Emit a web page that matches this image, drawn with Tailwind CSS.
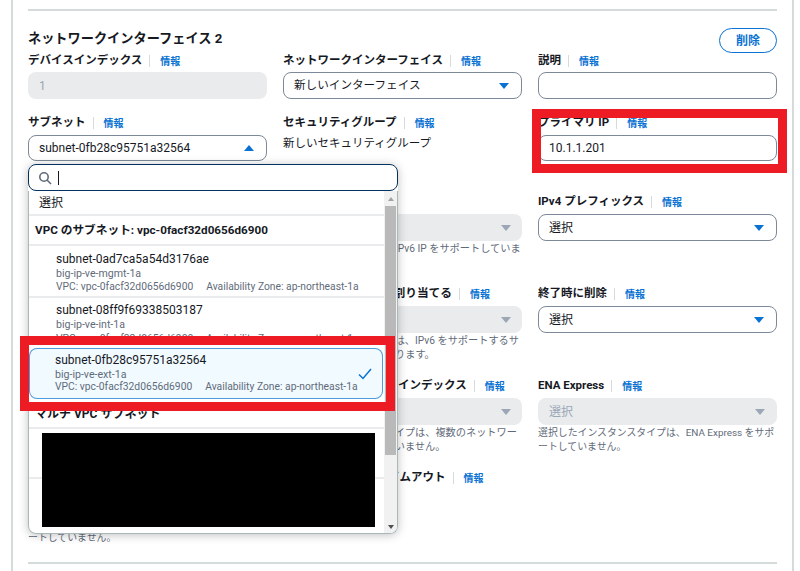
<!DOCTYPE html>
<html lang="ja">
  <head>
    <meta charset="UTF-8">
    <title>ネットワークインターフェイス</title>
    <script src="https://cdn.jsdelivr.net/npm/@tailwindcss/browser@4"></script>
  </head>

  <body class="bg-white overflow-hidden text-[#16191f] font-['Roboto','Noto_Sans_CJK_JP',sans-serif]">
    <div class="relative w-[800px] h-[571px] overflow-hidden">
      <!-- card edges -->
      <div class="mx-[11px] w-[783px] h-[571px] border-x-2 border-[#d5dbdb] px-[15px] pt-[9px]">
        <div class="border-t-2 border-[#d5dbdb] w-[749px]"></div>

        <!-- heading -->
        <div class="flex justify-between items-start h-[42px] pt-[17px] w-[749px]">
          <h2 class="text-[13.2px] font-bold leading-[22px]">ネットワークインターフェイス 2</h2>
          <button class="w-[58px] h-[25px] border border-[#0972d3] rounded-full text-[#0972d3] text-[12px] font-bold">削除</button>
        </div>

        <!-- fields -->
        <div class="grid grid-cols-[239px_239px_239px] gap-x-[16px] grid-rows-[62px_79px_92px_92px_92px_92px] w-[749px] h-[509px]">
          <!-- row 1 -->
          <div>
            <div class="flex items-center h-4 text-[11.5px] font-bold">デバイスインデックス<span class="ml-[7px] mr-[10px] w-px h-3 bg-[#d5dbdb]"></span><a class="text-[#0972d3] text-[10px] font-bold">情報</a></div>
            <div class="mt-[3px] h-[27px] rounded-lg bg-[#e9ebed] px-[11px] flex items-center text-[12px] text-[#9ba7b6]">1</div>
          </div>
          <div>
            <div class="flex items-center h-4 text-[11.5px] font-bold">ネットワークインターフェイス<span class="ml-[7px] mr-[10px] w-px h-3 bg-[#d5dbdb]"></span><a class="text-[#0972d3] text-[10px] font-bold">情報</a></div>
            <div class="mt-[3px] h-[27px] rounded-lg border border-[#7d8998] px-[10px] flex items-center justify-between text-[11.6px]">新しいインターフェイス<span class="w-0 h-0 mr-[2px] border-x-[5px] border-t-[6px] border-x-transparent border-t-[#0972d3]"></span></div>
          </div>
          <div>
            <div class="flex items-center h-4 text-[11.5px] font-bold">説明<span class="ml-[7px] mr-[10px] w-px h-3 bg-[#d5dbdb]"></span><a class="text-[#0972d3] text-[10px] font-bold">情報</a></div>
            <div class="mt-[3px] h-[27px] rounded-lg border border-[#7d8998]"></div>
          </div>

          <!-- row 2 -->
          <div>
            <div class="flex items-center h-4 text-[11.5px] font-bold">サブネット<span class="ml-[7px] mr-[10px] w-px h-3 bg-[#d5dbdb]"></span><a class="text-[#0972d3] text-[10px] font-bold">情報</a></div>
            <div class="mt-[4px] h-[26px] rounded-lg border border-[#7d8998] px-[10px] flex items-center justify-between text-[12px]">subnet-0fb28c95751a32564<span class="w-0 h-0 mr-[2px] border-x-[5px] border-b-[6px] border-x-transparent border-b-[#0972d3]"></span></div>
          </div>
          <div>
            <div class="flex items-center h-4 text-[11.5px] font-bold">セキュリティグループ<span class="ml-[7px] mr-[10px] w-px h-3 bg-[#d5dbdb]"></span><a class="text-[#0972d3] text-[10px] font-bold">情報</a></div>
            <div class="mt-[4px] text-[11.5px] leading-[16px]">新しいセキュリティグループ</div>
          </div>
          <div>
            <div class="flex items-center h-4 text-[11.5px] font-bold">プライマリ IP<span class="ml-[7px] mr-[10px] w-px h-3 bg-[#d5dbdb]"></span><a class="text-[#0972d3] text-[10px] font-bold">情報</a></div>
            <div class="mt-[4px] h-[26px] rounded-lg border border-[#7d8998] px-[10px] flex items-center text-[12px]">10.1.1.201</div>
          </div>

          <!-- row 3 -->
          <div></div>
          <div>
            <div class="h-4"></div>
            <div class="mt-[4px] h-[27px] rounded-lg bg-[#e9ebed] px-[11px] flex items-center justify-end"><span class="w-0 h-0 border-x-[5px] border-t-[6px] border-x-transparent border-t-[#9ba7b6]"></span></div>
            <p class="mt-px text-[10.2px] leading-[14px] text-[#5f6b7a]">選択したサブネットは、IPv6 IP をサポートしていません。</p>
          </div>
          <div>
            <div class="flex items-center h-4 text-[11.5px] font-bold">IPv4 プレフィックス<span class="ml-[7px] mr-[10px] w-px h-3 bg-[#d5dbdb]"></span><a class="text-[#0972d3] text-[10px] font-bold">情報</a></div>
            <div class="mt-[4px] h-[27px] rounded-lg border border-[#7d8998] px-[10px] flex items-center justify-between text-[12px]">選択<span class="w-0 h-0 mr-[2px] border-x-[5px] border-t-[6px] border-x-transparent border-t-[#0972d3]"></span></div>
          </div>

          <!-- row 4 -->
          <div></div>
          <div>
            <div class="flex items-center h-4 text-[11.7px] font-bold">IPv6 IP を常に自動で割り当てる<span class="ml-[7px] mr-[10px] w-px h-3 bg-[#d5dbdb]"></span><a class="text-[#0972d3] text-[10px] font-bold">情報</a></div>
            <div class="mt-[4px] h-[27px] rounded-lg bg-[#e9ebed] px-[11px] flex items-center justify-end"><span class="w-0 h-0 border-x-[5px] border-t-[6px] border-x-transparent border-t-[#9ba7b6]"></span></div>
            <p class="mt-px text-[10.2px] leading-[14px] text-[#5f6b7a]">このインスタンスタイプは、IPv6 をサポートするサブネットを選ぶ必要があります。</p>
          </div>
          <div>
            <div class="flex items-center h-4 text-[11.5px] font-bold">終了時に削除<span class="ml-[7px] mr-[10px] w-px h-3 bg-[#d5dbdb]"></span><a class="text-[#0972d3] text-[10px] font-bold">情報</a></div>
            <div class="mt-[4px] h-[27px] rounded-lg border border-[#7d8998] px-[10px] flex items-center justify-between text-[12px]">選択<span class="w-0 h-0 mr-[2px] border-x-[5px] border-t-[6px] border-x-transparent border-t-[#0972d3]"></span></div>
          </div>

          <!-- row 5 -->
          <div></div>
          <div>
            <div class="flex items-center h-4 text-[11.5px] font-bold">ネットワークカードのインデックス<span class="ml-[7px] mr-[10px] w-px h-3 bg-[#d5dbdb]"></span><a class="text-[#0972d3] text-[10px] font-bold">情報</a></div>
            <div class="mt-[4px] h-[27px] rounded-lg bg-[#e9ebed] px-[11px] flex items-center justify-end"><span class="w-0 h-0 border-x-[5px] border-t-[6px] border-x-transparent border-t-[#9ba7b6]"></span></div>
            <p class="mt-px text-[10.2px] leading-[14px] text-[#5f6b7a]">選択したインスタンスタイプは、複数のネットワークカードをサポートしていません。</p>
          </div>
          <div>
            <div class="flex items-center h-4 text-[11.5px] font-bold">ENA Express<span class="ml-[7px] mr-[10px] w-px h-3 bg-[#d5dbdb]"></span><a class="text-[#0972d3] text-[10px] font-bold">情報</a></div>
            <div class="mt-[4px] h-[27px] rounded-lg bg-[#e9ebed] px-[11px] flex items-center justify-between text-[12px] text-[#9ba7b6]">選択<span class="w-0 h-0 mr-px border-x-[5px] border-t-[6px] border-x-transparent border-t-[#9ba7b6]"></span></div>
            <p class="mt-px text-[9.9px] leading-[14px] text-[#5f6b7a] whitespace-nowrap">選択したインスタンスタイプは、ENA Express をサポ<br>ートしていません。</p>
          </div>

          <!-- row 6 -->
          <div class="pt-[47px]">
            <p class="text-[9.9px] leading-[14px] text-[#5f6b7a] whitespace-nowrap">選択したインスタンスタイプは、ENA Express をサポ<br>ートしていません。</p>
          </div>
          <div>
            <div class="flex items-center h-4 text-[11.5px] font-bold">TCP 確立済み接続タイムアウト<span class="ml-[7px] mr-[10px] w-px h-3 bg-[#d5dbdb]"></span><a class="text-[#0972d3] text-[10px] font-bold">情報</a></div>
          </div>
          <div></div>
        </div>
        <div class="border-t-2 border-[#d5dbdb] w-[749px]"></div>
      </div>

      <!-- open subnet dropdown -->
      <div class="absolute left-[28px] top-[164px] w-[370px] h-[370px] flex flex-col rounded-lg bg-white shadow-[0_1px_10px_rgba(0,0,0,0.25)]">
        <div class="h-[27px] shrink-0 rounded-lg border-[1.5px] border-[#033160] flex items-center px-[9px]">
          <svg width="14" height="14" viewBox="0 0 14 14" fill="none" stroke="#5f6b7a" stroke-width="1.6"><circle cx="6" cy="6" r="4.2"/><path d="M9 9l4 4"/></svg>
          <span class="ml-[6px] w-px h-[14px] bg-[#16191f]"></span>
        </div>
        <div class="flex flex-1 min-h-0 border border-t-0 border-[#aab7b8] rounded-b-lg overflow-hidden">
          <div class="relative w-[355px] overflow-hidden">
            <div class="h-[25px] pl-[10px] pt-px flex items-center text-[12px] border-b-2 border-[#e9ebed]">選択</div>
            <div class="h-[30px] pl-[6px] pt-[2px] flex items-center text-[11.7px] font-bold border-b-2 border-[#e9ebed]">VPC のサブネット: vpc-0facf32d0656d6900</div>
            <div class="h-[52px] pl-[27px] pt-[5px] border-b-2 border-[#e9ebed]">
              <div class="text-[12px] leading-[16px]">subnet-0ad7ca5a54d3176ae</div>
              <div class="text-[10.6px] leading-[13px] text-[#5f6b7a]">big-ip-ve-mgmt-1a</div>
              <div class="text-[10.3px] leading-[14px] text-[#5f6b7a] whitespace-nowrap">VPC: vpc-0facf32d0656d6900<span class="ml-[13px]">Availability Zone: ap-northeast-1a</span></div>
            </div>
            <div class="h-[50px] pl-[27px] pt-[4px]">
              <div class="text-[12px] leading-[16px]">subnet-08ff9f69338503187</div>
              <div class="text-[10.6px] leading-[14px] text-[#5f6b7a]">big-ip-ve-int-1a</div>
              <div class="text-[10.3px] leading-[13px] text-[#5f6b7a] whitespace-nowrap">VPC: vpc-0facf32d0656d6900<span class="ml-[13px]">Availability Zone: ap-northeast-1a</span></div>
            </div>
            <div class="relative h-[51px] mr-px pl-[25px] pt-[3px] border border-[#0972d3]/70 rounded-lg bg-[#f1faff]">
              <div class="text-[12px] leading-[16px]">subnet-0fb28c95751a32564</div>
              <div class="text-[10.6px] leading-[13px] text-[#5f6b7a]">big-ip-ve-ext-1a</div>
              <div class="text-[10.3px] leading-[12px] text-[#5f6b7a] whitespace-nowrap">VPC: vpc-0facf32d0656d6900<span class="ml-[13px]">Availability Zone: ap-northeast-1a</span></div>
              <svg class="absolute right-[10px] top-[19px]" width="14" height="12" viewBox="0 0 14 12" fill="none" stroke="#0972d3" stroke-width="1.5"><path d="M1 6.5l4 4L13 1"/></svg>
            </div>
            <div class="h-[30px] pl-[6px] pt-px flex items-center text-[12px] font-bold border-b-2 border-[#e9ebed]">マルチ VPC サブネット</div>
            <div class="h-[50px] border-b-2 border-[#e9ebed]"></div>
            <!-- redaction -->
            <div class="absolute left-[13px] top-[242px] w-[333px] h-[94px] bg-black"></div>
          </div>
          <!-- scrollbar -->
          <div class="w-[13px] bg-[#f1f1f1] flex flex-col items-center">
            <span class="mt-[6px] w-0 h-0 border-x-[3px] border-b-[4px] border-x-transparent border-b-[#a3a3a3]"></span>
            <div class="mt-[5px] w-[11px] h-[249px] bg-[#b9b9b9]"></div>
            <span class="mt-auto mb-[4px] w-0 h-0 border-x-[3px] border-t-[4px] border-x-transparent border-t-[#505050]"></span>
          </div>
        </div>
      </div>

      <!-- red annotations -->
      <div class="absolute left-[532px] top-[109px] w-[255px] h-[64px] border-[9px] border-[#ed1c24]"></div>
      <div class="absolute left-[20px] top-[336px] w-[375px] h-[75px] border-[9px] border-[#ed1c24]"></div>
    </div>
  </body>
</html>
